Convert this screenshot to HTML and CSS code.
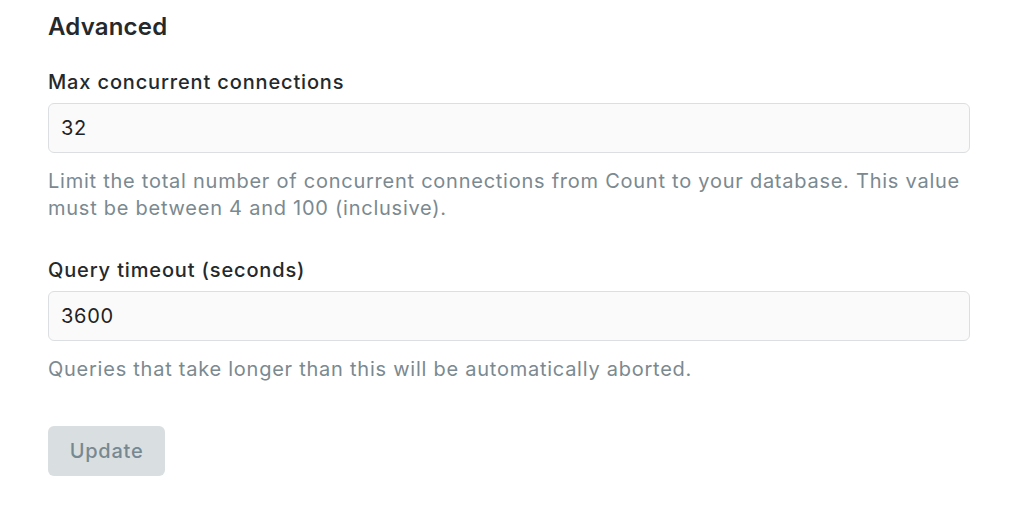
FILE: index.html
```html
<!DOCTYPE html>
<html>
<head>
<meta charset="utf-8">
<link rel="stylesheet" href="styles.css">
</head>
<body>
<div class="section">
  <h2 class="title">Advanced</h2>
  <div class="field">
    <label class="label">Max concurrent connections</label>
    <div class="input">32</div>
    <p class="help">Limit the total number of concurrent connections from Count to your database. This value must be between 4 and 100 (inclusive).</p>
  </div>
  <div class="field">
    <label class="label">Query timeout (seconds)</label>
    <div class="input">3600</div>
    <p class="help">Queries that take longer than this will be automatically aborted.</p>
  </div>
  <button class="btn">Update</button>
</div>
</body>
</html>
```
FILE: styles.css
```css
html, body {
  margin: 0;
  padding: 0;
  background: #ffffff;
}
body {
  font-family: Inter, "Noto Sans", sans-serif;
  color: #24292c;
  letter-spacing: 0.75px;
}
.section {
  width: 922px;
  padding: 12px 0 0 48px;
  display: flex;
  flex-direction: column;
  align-items: flex-start;
}
.title {
  margin: 0;
  font-size: 24px;
  font-weight: 600;
  line-height: 30px;
  letter-spacing: 0.2px;
}
.field {
  width: 100%;
  margin-top: 28px;
}
.field + .field {
  margin-top: 36px;
}
.label {
  display: block;
  font-size: 20px;
  font-weight: 500;
  line-height: 24px;
  margin-bottom: 9px;
  letter-spacing: 0.85px;
}
.input {
  box-sizing: border-box;
  width: 100%;
  height: 50px;
  border: 1px solid #dcdfe1;
  border-radius: 6px;
  background: #fafafa;
  padding: 0 12px;
  display: flex;
  align-items: center;
  font-size: 20px;
  color: #1e2326;
}
.help {
  margin: 15px 0 0;
  font-size: 20px;
  line-height: 27px;
  color: #7b8990;
}
.btn {
  margin-top: 43px;
  width: 117px;
  height: 50px;
  border: none;
  border-radius: 6px;
  background: #d9dee1;
  color: #788890;
  font-family: inherit;
  font-size: 20px;
  font-weight: 500;
  letter-spacing: 0.75px;
}
```
